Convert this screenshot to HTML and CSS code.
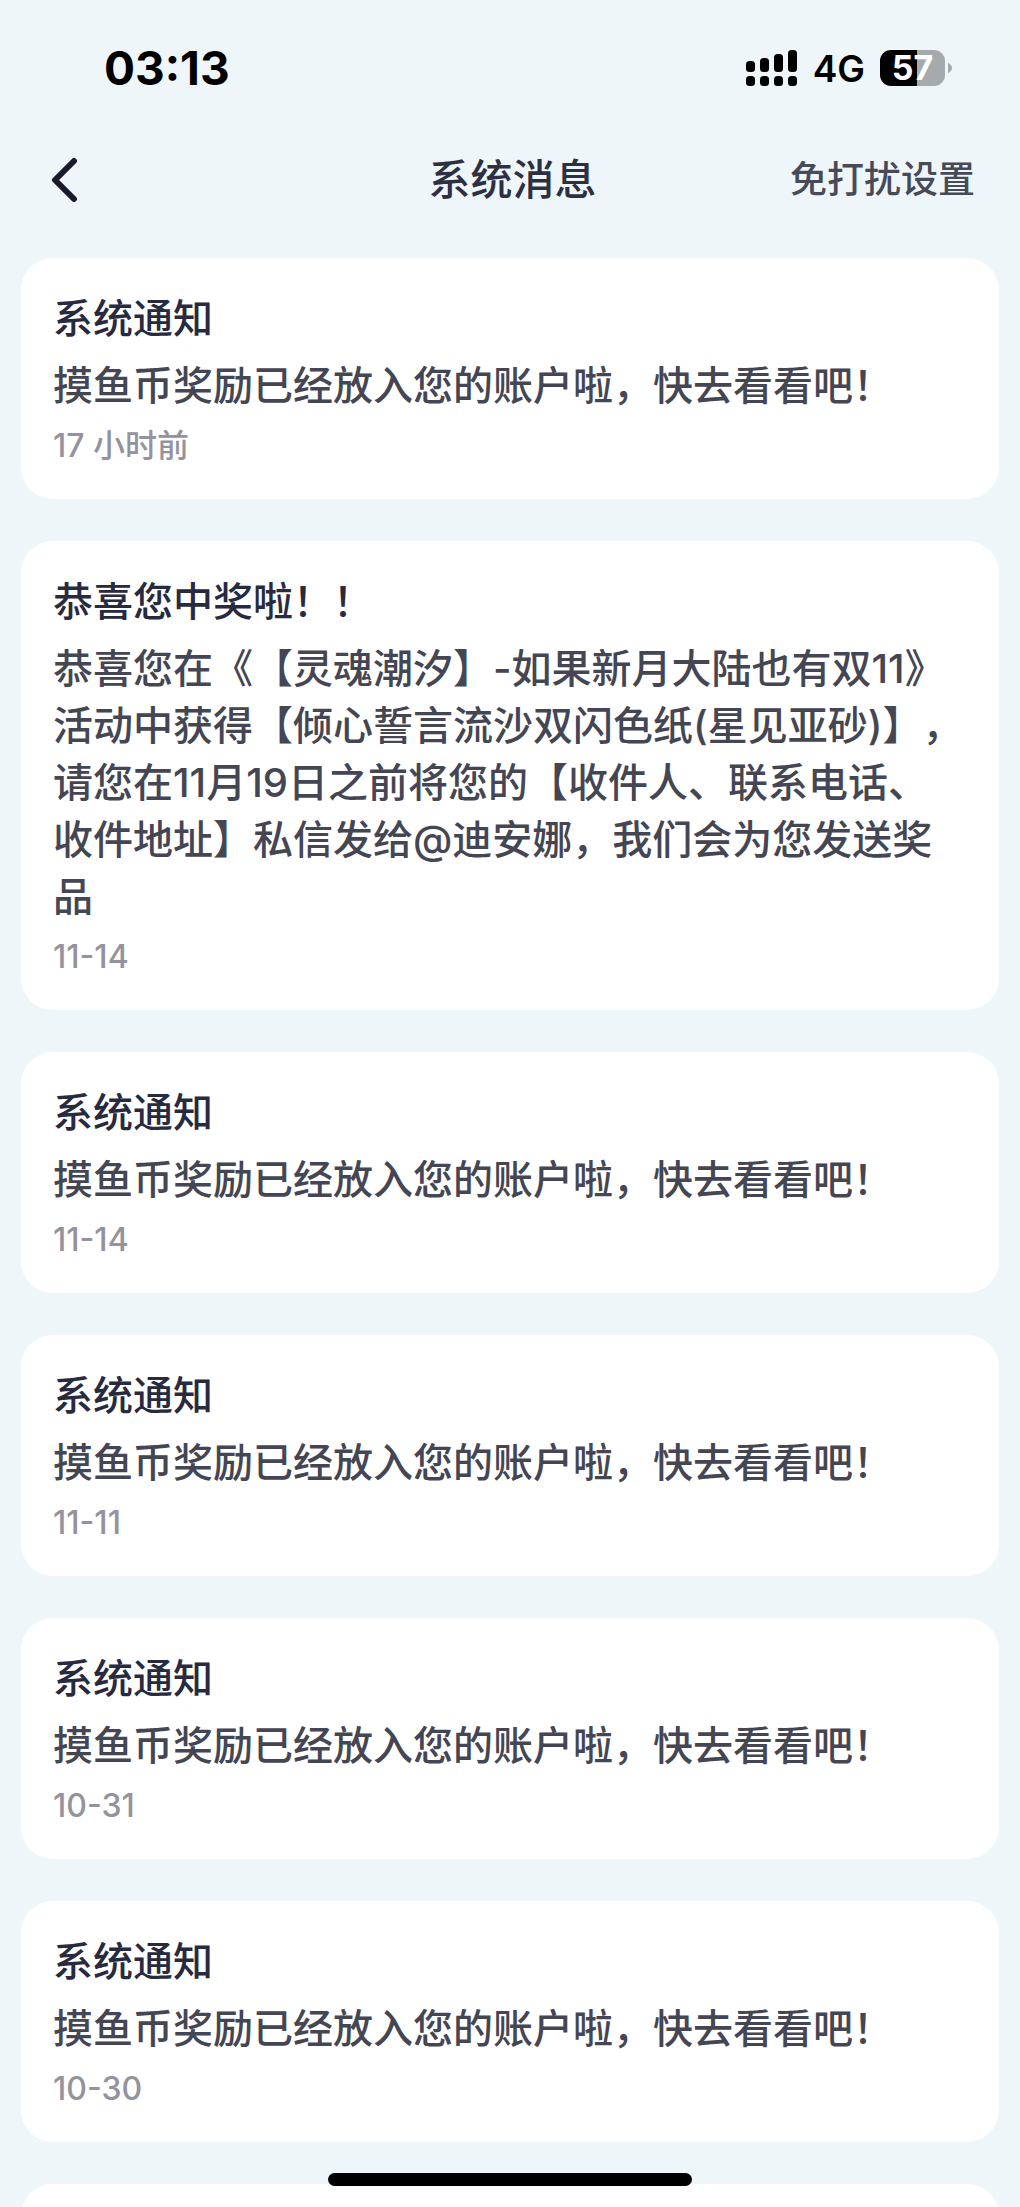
FILE: index.html
```html
<!DOCTYPE html>
<html lang="zh-CN">
<head>
    <meta charset="UTF-8">
    <meta name="viewport" content="width=device-width, initial-scale=1.0">
    <title>系统消息</title>
    <link rel="stylesheet" href="styles.css">
</head>
<body>
    <div class="status-bar">
        <span class="time">03:13</span>
        <div class="status-icons">
            <svg class="signal" width="52" height="36" viewBox="0 0 52 36">
                <rect x="0" y="11" width="9" height="11" rx="3.5"/>
                <rect x="14" y="8" width="9" height="14" rx="3.5"/>
                <rect x="28" y="4" width="9" height="18" rx="3.5"/>
                <rect x="42" y="0" width="9" height="22" rx="3.5"/>
                <rect x="0" y="26" width="9" height="10" rx="3.5"/>
                <rect x="14" y="26" width="9" height="10" rx="3.5"/>
                <rect x="28" y="26" width="9" height="10" rx="3.5"/>
                <rect x="42" y="26" width="9" height="10" rx="3.5"/>
            </svg>
            <span class="network">4G</span>
            <div class="battery">
                <span class="battery-level">57</span>
                <svg width="4" height="10" viewBox="0 0 4 10">
                    <path d="M0 0C2 1 4 2.500 4 5S2 9 0 10Z"/>
                </svg>
            </div>
        </div>
    </div>

    <header class="navbar">
        <button class="back" type="button" aria-label="返回">
            <svg width="28" height="46" viewBox="0 0 28 46">
                <path d="M24 4L5 23L24 42"/>
            </svg>
        </button>
        <h1>系统消息</h1>
        <a class="settings" href="#">免打扰设置</a>
    </header>

    <main class="messages">
        <article class="card">
            <h2>系统通知</h2>
            <p>摸鱼币奖励已经放入您的账户啦，快去看看吧！</p>
            <time>17 小时前</time>
        </article>
        <article class="card">
            <h2>恭喜您中奖啦！！</h2>
            <p>恭喜您在《【灵魂潮汐】-如果新月大陆也有双11》活动中获得【倾心誓言流沙双闪色纸(星见亚砂)】，请您在11月19日之前将您的【收件人、联系电话、收件地址】私信发给@迪安娜，我们会为您发送奖品</p>
            <time>11-14</time>
        </article>
        <article class="card">
            <h2>系统通知</h2>
            <p>摸鱼币奖励已经放入您的账户啦，快去看看吧！</p>
            <time>11-14</time>
        </article>
        <article class="card">
            <h2>系统通知</h2>
            <p>摸鱼币奖励已经放入您的账户啦，快去看看吧！</p>
            <time>11-11</time>
        </article>
        <article class="card">
            <h2>系统通知</h2>
            <p>摸鱼币奖励已经放入您的账户啦，快去看看吧！</p>
            <time>10-31</time>
        </article>
        <article class="card">
            <h2>系统通知</h2>
            <p>摸鱼币奖励已经放入您的账户啦，快去看看吧！</p>
            <time>10-30</time>
        </article>
        <article class="card"></article>
    </main>

    <div class="home-indicator"></div>
</body>
</html>
```
FILE: styles.css
```css
* {
    box-sizing: border-box;
}
body {
    display: flex;
    flex-direction: column;
    height: 100vh;
    margin: 0;
    overflow: hidden;
    background-color: #eff6f9;
    font-family: Inter, "Noto Sans CJK SC", sans-serif;
    font-weight: 500;
    text-spacing-trim: space-all;
}
h1, h2, p {
    margin: 0;
}

/* status bar */
.status-bar {
    display: flex;
    flex-shrink: 0;
    justify-content: space-between;
    align-items: center;
    height: 136px;
    padding: 0 68px 0 104px;
    color: #000;
}
.time {
    font-size: 46px;
    font-weight: 700;
}
.status-icons {
    display: flex;
    align-items: center;
    gap: 15px;
}
.network {
    font-size: 37px;
    font-weight: 600;
}
.battery {
    display: flex;
    align-items: center;
    gap: 3px;
}
.battery svg {
    fill: #a5aaac;
}
.battery-level {
    width: 65px;
    border-radius: 11px;
    background: linear-gradient(to right, #000 57%, #a5aaac 57%);
    color: #fff;
    font-size: 34px;
    font-weight: 700;
    line-height: 36px;
    text-align: center;
}

/* title row */
.navbar {
    display: grid;
    flex-shrink: 0;
    grid-template-columns: 1fr auto 1fr;
    align-items: center;
    height: 88px;
    padding: 0 45px 0 50px;
    line-height: 56px;
}
.navbar h1 {
    color: #2d3042;
    font-size: 42px;
    font-weight: 500;
}
.back {
    justify-self: start;
    display: flex;
    padding: 0;
    border: none;
    background: none;
}
.back path {
    fill: none;
    stroke: #191a2b;
    stroke-width: 6;
    stroke-linecap: round;
    stroke-linejoin: round;
}
.settings {
    justify-self: end;
    color: #474b57;
    font-size: 37px;
    text-decoration: none;
}

/* message list */
.messages {
    display: flex;
    flex: 1;
    flex-direction: column;
    gap: 42px;
    min-height: 0;
    padding: 34px 21px 0;
    overflow: hidden;
}
.card {
    display: flex;
    flex-direction: column;
    flex-shrink: 0;
    gap: 10px;
    min-height: 241px;
    padding: 32px;
    border-radius: 32px;
    background: #fff;
}
.card h2 {
    color: #282a40;
    font-size: 40px;
    font-weight: 500;
    line-height: 57px;
}
.card p {
    color: #454654;
    font-size: 40px;
    line-height: 57px;
}
.card time {
    color: #94939d;
    font-size: 32px;
    line-height: 43px;
}

.home-indicator {
    position: fixed;
    bottom: 21px;
    left: 50%;
    width: 364px;
    height: 13px;
    border-radius: 7px;
    background: #000;
    transform: translateX(-50%);
}
```
